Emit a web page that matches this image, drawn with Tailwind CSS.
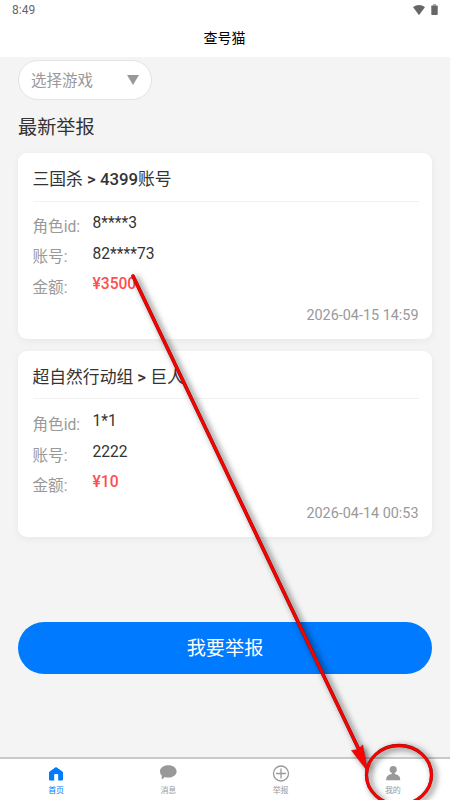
<!DOCTYPE html>
<html lang="zh-CN">
<head>
<meta charset="utf-8">
<meta name="viewport" content="width=device-width, initial-scale=1">
<title>查号猫</title>
<script src="https://cdn.jsdelivr.net/npm/@tailwindcss/browser@4"></script>
</head>
<body class="relative flex h-[800px] w-[450px] flex-col overflow-hidden bg-[#f4f4f4] font-['Roboto','Noto_Sans_CJK_SC',sans-serif] text-[#333]">
  <header class="flex h-[57px] shrink-0 flex-col bg-white">
    <div class="flex h-5 items-center justify-between pr-3 pl-3 text-[12px] leading-5 text-[#666]">
      <span>8:49</span>
      <span class="flex items-start gap-[6px] pb-[2px]">
        <svg class="mt-px h-[10px] w-[12px]" viewBox="0 0 12 10" fill="#666"><path d="M0 2.1Q6-2 12 2.1L6.5 9.6Q6 10.2 5.500 9.600Z"/></svg>
        <svg class="h-[11px] w-[7px]" viewBox="0 0 7 11"><path d="M2 0h3v1.500H2z" fill="#aaa"/><rect x=".3" y="1.400" width="6.400" height="9.600" rx=".8" fill="#666"/></svg>
      </span>
    </div>
    <h1 class="mt-[7px] pr-px text-center text-[14px] leading-[22px] text-black">查号猫</h1>
  </header>

  <main class="flex flex-1 flex-col px-[18px] pt-[3px]">
    <div class="flex h-10 w-[134px] shrink-0 items-center justify-between rounded-full border border-[#e4e4e4] bg-white pr-3 pl-3 text-[15.500px] text-[#999]">
      <span class="pt-1">选择游戏</span>
      <svg class="h-[10px] w-[12px]" viewBox="0 0 12 10" fill="#999"><path d="M0 0h12L6 10z"/></svg>
    </div>
    <h2 class="mt-[14px] text-[19.200px] leading-[28px]">最新举报</h2>

    <section class="mt-[10.500px] flex h-[186px] shrink-0 flex-col rounded-[9px] bg-white pr-[13.500px] pl-[14.500px] shadow-[0_2px_8px_rgba(0,0,0,0.05)]">
      <h3 class="flex h-[49px] shrink-0 items-center border-b border-[#f2f2f2] pt-[6px] text-[16.800px] font-medium"><span class="whitespace-pre"><span class="font-normal">三国杀</span> &gt; 4399<span class="font-normal">账号</span></span></h3>
      <dl class="mt-[9px] grid grid-cols-[60px_1fr] text-[15.600px]">
        <dt class="h-[30.500px] pt-[4px] leading-[24px] text-[#999]">角色id:</dt><dd class="leading-[24px]">8****3</dd>
        <dt class="h-[30.500px] pt-[4px] leading-[24px] text-[#999]">账号:</dt><dd class="pt-[0.500px] leading-[24px]">82****73</dd>
        <dt class="h-[30.500px] pt-[4px] leading-[24px] text-[#999]">金额:</dt><dd class="font-medium leading-[24px] text-[#ff4d4f]">¥3500</dd>
      </dl>
      <time class="mt-[3px] text-right text-[14.400px] leading-[22px] text-[#999]">2026-04-15 14:59</time>
    </section>

    <section class="mt-[12px] flex h-[186px] shrink-0 flex-col rounded-[9px] bg-white pr-[13.500px] pl-[14.500px] shadow-[0_2px_8px_rgba(0,0,0,0.05)]">
      <h3 class="flex h-[48px] shrink-0 items-center border-b border-[#f2f2f2] pt-[8px] text-[16.800px] font-medium"><span class="whitespace-pre"><span class="font-normal">超自然行动组</span> &gt; <span class="font-normal">巨人</span></span></h3>
      <dl class="mt-[10px] grid grid-cols-[60px_1fr] text-[15.600px]">
        <dt class="h-[30.500px] pt-[4px] leading-[24px] text-[#999]">角色id:</dt><dd class="leading-[24px]">1*1</dd>
        <dt class="h-[30.500px] pt-[4.500px] leading-[24px] text-[#999]">账号:</dt><dd class="pt-[0.500px] leading-[24px]">2222</dd>
        <dt class="h-[30.500px] pt-[4px] leading-[24px] text-[#999]">金额:</dt><dd class="font-medium leading-[24px] text-[#ff4d4f]">¥10</dd>
      </dl>
      <time class="mt-[3px] text-right text-[14.400px] leading-[22px] text-[#999]">2026-04-14 00:53</time>
    </section>

    <button class="mt-auto mb-[83px] h-[52.500px] shrink-0 rounded-full bg-[#007aff] pt-[3px] text-[19.200px] text-white">我要举报</button>
  </main>

  <nav class="grid h-[43px] shrink-0 grid-cols-4 border-t-2 border-[#c8c8c8] bg-white pr-px text-[8px] leading-[14px] text-[#999]">
    <a class="flex flex-col items-center pt-[5px] text-[#007aff]">
      <svg class="h-5 w-5" viewBox="0 0 20 20" fill="currentColor"><path d="M9.200 3.500Q10 2.800 10.800 3.500L16.300 7.500Q17 8 17 8.800V15.500Q17 16.500 16 16.500H12.200V10.700Q12.200 10 11.500 10H8.900Q8.200 10 8.200 10.700V16.500H4Q3 16.500 3 15.500V8.800Q3 8 3.700 7.500Z"/></svg>
      <span>首页</span>
    </a>
    <a class="flex flex-col items-center pt-[5px]">
      <svg class="h-5 w-5" viewBox="0 0 20 20" fill="currentColor"><path d="M10.300 1.300C15 1.300 18.600 4 18.600 7.500S15 13.600 10.300 13.600Q8.400 13.600 6.800 13.100L4.200 15.200Q3.700 15.500 3.700 14.900L3.800 11.400Q1.900 9.800 1.900 7.500C1.900 4 5.600 1.300 10.300 1.300Z"/></svg>
      <span>消息</span>
    </a>
    <a class="flex flex-col items-center pt-[5px]">
      <svg class="h-5 w-5" viewBox="0 0 20 20" fill="none" stroke="currentColor" stroke-width="1.300"><circle cx="10" cy="9.500" r="7.500"/><path d="M10 4.500v10M5 9.500h10"/></svg>
      <span>举报</span>
    </a>
    <a class="flex flex-col items-center pt-[5px]">
      <svg class="h-5 w-5" viewBox="0 0 20 20" fill="currentColor"><path d="M8.700 8.200h3v2h-3z"/><circle cx="10.200" cy="5.500" r="3.600"/><path d="M3.200 15.200Q3.200 11.500 7.500 10.200Q10.200 9.100 12.900 10.200Q17.200 11.500 17.200 15.200V16.300H3.200Z"/></svg>
      <span>我的</span>
    </a>
  </nav>

  <!-- Annotation: arrow leading to the profile tab -->
  <svg class="pointer-events-none absolute top-0 left-0 h-[800px] w-[450px] drop-shadow-[3px_2px_3px_rgba(0,0,0,0.6)]" viewBox="0 0 450 800" fill="none">
    <path d="M133 276L360 752" stroke="#7a1010" stroke-width="3.600" stroke-linecap="round"/>
    <path d="M133 276L360 752" stroke="#fa0000" stroke-width="2.900" stroke-linecap="round"/>
    <path d="M367.800 771.500L351.500 750.500L358 749.500L362.700 745Z" fill="#fa0000" stroke="#c01010" stroke-width=".6"/>
    <ellipse cx="399" cy="775" rx="32.500" ry="29.500" stroke="#8a1010" stroke-width="3.300"/>
    <ellipse cx="399" cy="775" rx="32.500" ry="29.500" stroke="#fa0000" stroke-width="2.700"/>
  </svg>
</body>
</html>
